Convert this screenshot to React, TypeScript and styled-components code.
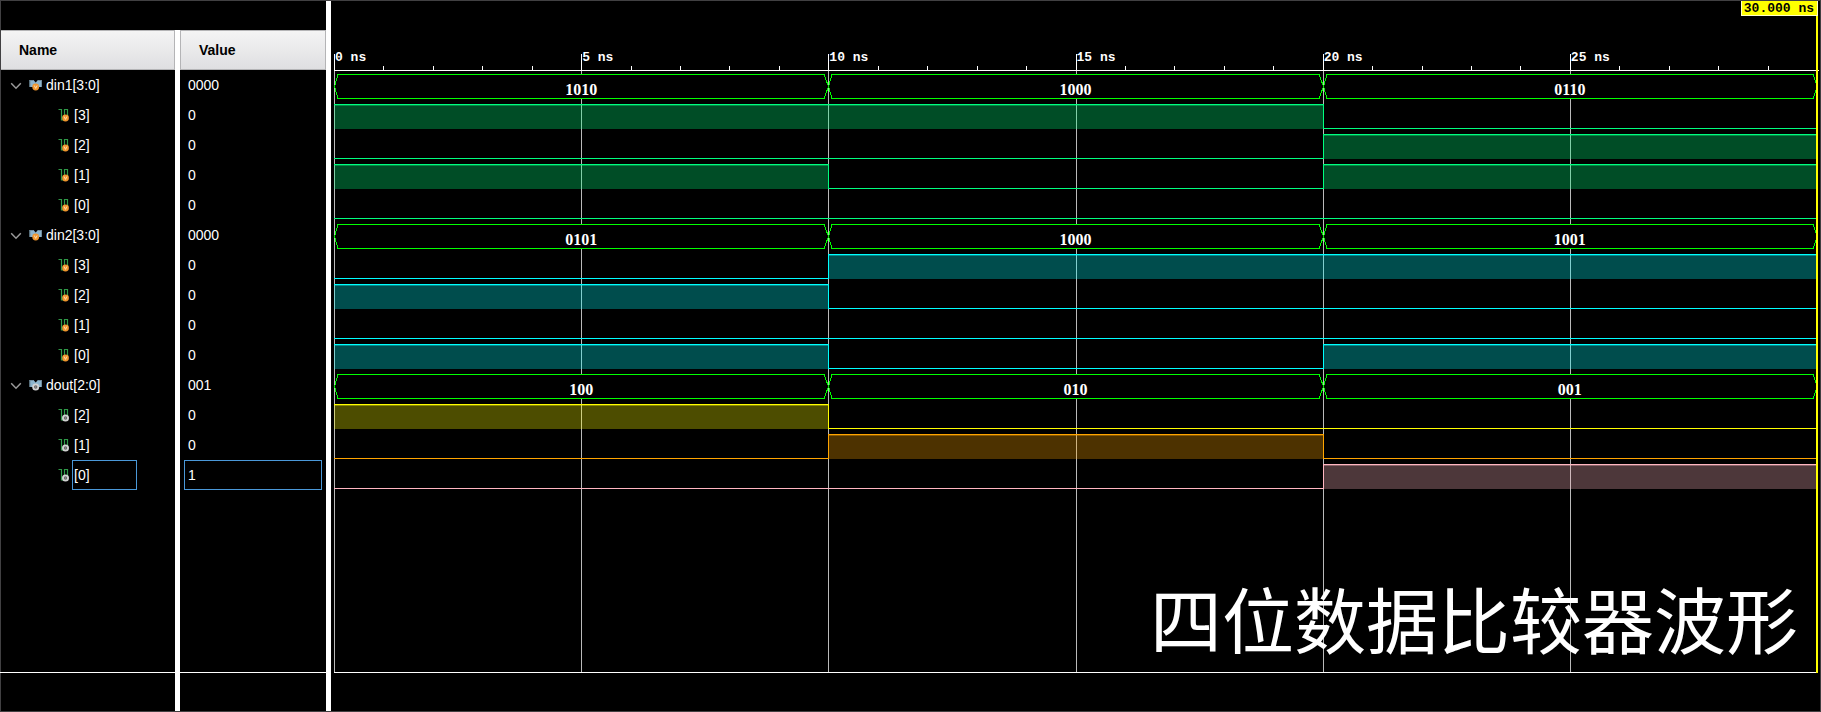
import React from "react";
import styled, { createGlobalStyle, css } from "styled-components";

const GlobalStyle = createGlobalStyle`
  *, *::before, *::after { box-sizing: border-box; }
  body {
    margin: 0;
    background: #000;
    color: #fff;
    font-family: "Liberation Sans", Arial, sans-serif;
    font-size: 14px;
  }
`;

const EDGE = "#414042";
const BUS = "#00ff00";
const SELECTION = "#4a98d8";
const DURATION = 30;

type Kind = "input" | "output";

interface Bit {
  label: string;
  value: string;
  color: string;
  levels: number[];
}

interface Bus {
  name: string;
  value: string;
  kind: Kind;
  segments: string[];
  bits: Bit[];
}

const GREEN = "0, 255, 127";
const CYAN = "0, 255, 255";
const YELLOW = "255, 255, 0";
const ORANGE = "255, 165, 0";
const PINK = "255, 182, 193";

const buses: Bus[] = [
  {
    name: "din1[3:0]",
    value: "0000",
    kind: "input",
    segments: ["1010", "1000", "0110"],
    bits: [
      { label: "[3]", value: "0", color: GREEN, levels: [1, 1, 0] },
      { label: "[2]", value: "0", color: GREEN, levels: [0, 0, 1] },
      { label: "[1]", value: "0", color: GREEN, levels: [1, 0, 1] },
      { label: "[0]", value: "0", color: GREEN, levels: [0, 0, 0] },
    ],
  },
  {
    name: "din2[3:0]",
    value: "0000",
    kind: "input",
    segments: ["0101", "1000", "1001"],
    bits: [
      { label: "[3]", value: "0", color: CYAN, levels: [0, 1, 1] },
      { label: "[2]", value: "0", color: CYAN, levels: [1, 0, 0] },
      { label: "[1]", value: "0", color: CYAN, levels: [0, 0, 0] },
      { label: "[0]", value: "0", color: CYAN, levels: [1, 0, 1] },
    ],
  },
  {
    name: "dout[2:0]",
    value: "001",
    kind: "output",
    segments: ["100", "010", "001"],
    bits: [
      { label: "[2]", value: "0", color: YELLOW, levels: [1, 0, 0] },
      { label: "[1]", value: "0", color: ORANGE, levels: [0, 1, 0] },
      { label: "[0]", value: "1", color: PINK, levels: [0, 0, 1] },
    ],
  },
];

const Page = styled.main`
  display: flex;
  min-height: 100vh;
  border: 1px solid ${EDGE};
  border-left: 0;
`;

const SignalPanel = styled.section`
  display: flex;
  flex-direction: column;
  flex: none;
  width: 331px;
  border-right: 5px solid #fff;
`;

const Toolbar = styled.div`
  height: 29px;
  border-left: 1px solid ${EDGE};
`;

const SignalTable = styled.table`
  width: 100%;
  table-layout: fixed;
  border-collapse: separate;
  border-spacing: 0;
  line-height: 30px;
`;

const nameColumn = css`
  width: 180px;
  border-left: 1px solid ${EDGE};
  border-right: 5px solid #fff;
`;

const HeadCell = styled.th<{ $first?: boolean }>`
  ${(p) => p.$first && nameColumn}
  height: 40px;
  padding: 0;
`;

const HeadLabel = styled.div`
  height: 40px;
  padding-left: 18px;
  border: 1px solid #b4b4b6;
  border-left-width: 0;
  background: linear-gradient(#f4f4f4, #dfdfe1);
  color: #000;
  line-height: 38px;
  text-align: left;

  ${HeadCell} + ${HeadCell} & {
    border-left-width: 1px;
  }
`;

const NameCell = styled.td`
  ${nameColumn}
  height: 30px;
  padding: 0;
`;

const NameContent = styled.div<{ $indent?: boolean }>`
  display: flex;
  align-items: center;
  height: 30px;
  padding-left: ${(p) => (p.$indent ? 57 : 9)}px;
`;

const Toggle = styled.button`
  display: flex;
  align-items: center;
  justify-content: center;
  width: 12px;
  height: 12px;
  margin: 2px 7px 0 0;
  padding: 0;
  border: 0;
  background: none;
`;

const NameText = styled.span<{ $selected?: boolean }>`
  height: 30px;
  line-height: ${(p) => (p.$selected ? 28 : 30)}px;
  border: ${(p) => (p.$selected ? `1px solid ${SELECTION}` : "0")};
  width: ${(p) => (p.$selected ? "65px" : "auto")};
  margin-left: ${(p) => (p.$selected ? 1 : 3)}px;
  padding-left: ${(p) => (p.$selected ? 1 : 0)}px;
`;

const ValueCell = styled.td`
  height: 30px;
  padding: 0 4px;
`;

const ValueText = styled.div<{ $selected?: boolean }>`
  height: 30px;
  padding-left: 3px;
  border: 1px solid ${(p) => (p.$selected ? SELECTION : "transparent")};
  line-height: 28px;
`;

const Rest = styled.div`
  display: flex;
  flex: 1;
  border-bottom: 1px solid #fff;
`;

const PanelFoot = styled.div`
  display: flex;
  height: 38px;
`;

const NameSpace = styled.div`
  ${nameColumn}
`;

const WavePanel = styled.section`
  position: relative;
  display: flex;
  flex: 1;
  flex-direction: column;
  min-width: 0;
  padding: 0 3px;
  font-family: "Liberation Mono", "Courier New", monospace;
  font-size: 13px;
  font-weight: bold;
`;

const timeColumns = css`
  display: grid;
  grid-auto-flow: column;
  grid-auto-columns: minmax(0, 1fr);
`;

const Ruler = styled.div`
  ${timeColumns}
  align-items: end;
  height: 69px;
`;

const Tick = styled.div<{ $major: boolean }>`
  height: ${(p) => (p.$major ? 16 : 4)}px;
  border-left: 1px solid #fff;
  line-height: 8px;
  white-space: nowrap;
`;

const Plot = styled.div`
  position: relative;
  flex: 1;
  border-bottom: 1px solid #fff;
`;

const AxisLine = styled.div`
  height: 1px;
  margin-right: -2px;
  background: #fff;
`;

const GridLines = styled.div`
  ${timeColumns}
  position: absolute;
  inset: 0;
`;

const GridCell = styled.div`
  border-left: 1px solid #bababa;
`;

const Lane = styled.div`
  ${timeColumns}
  grid-template-rows: 25px;
  position: relative;
  height: 30px;
  padding: 3px 0 2px;
`;

const BitSegment = styled.div<{ $rgb: string; $high: boolean; $edge: boolean }>`
  border-left: ${(p) => (p.$edge ? `1px solid rgb(${p.$rgb})` : "0")};
  ${(p) =>
    p.$high
      ? css`
          border-top: 1px solid rgb(${p.$rgb});
          background: rgba(${p.$rgb}, 0.3);
          background-clip: padding-box;
          box-shadow: inset 0 1px rgba(${p.$rgb}, 0.35);
        `
      : css`
          border-bottom: 1px solid rgb(${p.$rgb});
        `}
`;

const BusSegment = styled.div`
  display: flex;
  height: 25px;
`;

const BusBody = styled.div`
  flex: 1;
  height: 25px;
  border-top: 1px solid ${BUS};
  border-bottom: 1px solid ${BUS};
  background: #000;
  font-family: "Liberation Serif", "Times New Roman", serif;
  font-size: 16px;
  line-height: 29px;
  text-align: center;
`;

const Cursor = styled.div`
  position: absolute;
  top: 0;
  right: 2px;
  bottom: 38px;
  width: 2px;
  background: #ff0;
`;

const CursorTime = styled.div`
  position: absolute;
  top: 0;
  right: 2px;
  height: 15px;
  padding: 0 3px 0 2px;
  border: 1px solid #ffffc8;
  border-top: 0;
  background: #ff0;
  color: #000;
  line-height: 16px;
  white-space: nowrap;
`;

const Caption = styled.h1`
  position: absolute;
  right: 22px;
  bottom: 46px;
  margin: 0;
  font-family: "Noto Sans CJK SC", sans-serif;
  font-size: 72px;
  font-weight: 400;
  line-height: 96px;
  white-space: nowrap;
`;

const WaveFoot = styled.div`
  height: 38px;
`;

const Chevron = () => (
  <svg width="12" height="8" viewBox="0 0 12 8" fill="none" aria-hidden="true">
    <path d="M1.2 1.3 6 6.2l4.8-4.9" stroke="#9a9a9a" strokeWidth="1.5" />
  </svg>
);

const Marker = ({ kind, x, y }: { kind: Kind; x: number; y: number }) =>
  kind === "input" ? (
    <g>
      <circle cx={x} cy={y} r="3.4" fill="#f0962e" />
      <path d={`M${x - 1.4} ${y - 1.5}L${x} ${y + 1.4}L${x + 1.4} ${y - 1.5}`} stroke="#ffe2b8" strokeWidth="0.9" fill="none" />
    </g>
  ) : (
    <g>
      <circle cx={x} cy={y} r="2.6" fill="#666" stroke="#d2d2d2" strokeWidth="1.8" />
      <circle cx={x} cy={y} r="0.7" fill="#999" />
    </g>
  );

const BusIcon = ({ kind }: { kind: Kind }) => (
  <svg width="14" height="12" viewBox="0 0 14 12" aria-hidden="true">
    <path d="M.5 1h4l2.200 2.500 2.200-2.500h4v7H.5z" fill="#8db5cd" />
    <path d="M.5 1.500h3.800M9.200 1.500h3.800M1 1v7M12.500 1v7" stroke="#6c8595" strokeWidth="0.8" fill="none" />
    <Marker kind={kind} x={6.7} y={8} />
  </svg>
);

const BitIcon = ({ kind }: { kind: Kind }) => (
  <svg width="13" height="14" viewBox="0 0 13 14" aria-hidden="true">
    <path d="M.5 1.500h3V12h3V1.500h3V9" stroke="#2f9a48" strokeWidth="1.200" fill="none" />
    <Marker kind={kind} x={7.5} y={10} />
  </svg>
);

const LeftCap = () => (
  <svg width="4" height="25" viewBox="0 0 4 25" shapeRendering="crispEdges" aria-hidden="true">
    <path d="M4 .5 .5 12.500 4 24.500" stroke={BUS} fill="none" />
  </svg>
);

const RightCap = () => (
  <svg width="4" height="25" viewBox="0 0 4 25" overflow="visible" shapeRendering="crispEdges" aria-hidden="true">
    <path d="M0 .5 4.500 12.500 0 24.500" stroke={BUS} fill="none" />
  </svg>
);

const BusLane = ({ segments }: { segments: string[] }) => (
  <Lane>
    {segments.map((text, i) => (
      <BusSegment key={i}>
        <LeftCap />
        <BusBody>{text}</BusBody>
        <RightCap />
      </BusSegment>
    ))}
  </Lane>
);

const BitLane = ({ bit }: { bit: Bit }) => (
  <Lane>
    {bit.levels.map((level, i) => (
      <BitSegment key={i} $rgb={bit.color} $high={level === 1} $edge={i > 0 && bit.levels[i - 1] !== level} />
    ))}
  </Lane>
);

export default function App() {
  return (
    <>
      <GlobalStyle />
      <Page>
        <SignalPanel>
          <Toolbar />
          <SignalTable>
            <thead>
              <tr>
                <HeadCell $first scope="col">
                  <HeadLabel>Name</HeadLabel>
                </HeadCell>
                <HeadCell scope="col">
                  <HeadLabel>Value</HeadLabel>
                </HeadCell>
              </tr>
            </thead>
            <tbody>
              {buses.map((bus) => (
                <React.Fragment key={bus.name}>
                  <tr>
                    <NameCell>
                      <NameContent>
                        <Toggle type="button" aria-label={`Collapse ${bus.name}`} aria-expanded="true">
                          <Chevron />
                        </Toggle>
                        <BusIcon kind={bus.kind} />
                        <NameText>{bus.name}</NameText>
                      </NameContent>
                    </NameCell>
                    <ValueCell>
                      <ValueText>{bus.value}</ValueText>
                    </ValueCell>
                  </tr>
                  {bus.bits.map((bit) => (
                    <tr key={bit.label}>
                      <NameCell>
                        <NameContent $indent>
                          <BitIcon kind={bus.kind} />
                          <NameText $selected={bit.value === "1"}>{bit.label}</NameText>
                        </NameContent>
                      </NameCell>
                      <ValueCell>
                        <ValueText $selected={bit.value === "1"}>{bit.value}</ValueText>
                      </ValueCell>
                    </tr>
                  ))}
                </React.Fragment>
              ))}
            </tbody>
          </SignalTable>
          <Rest>
            <NameSpace />
          </Rest>
          <PanelFoot>
            <NameSpace />
          </PanelFoot>
        </SignalPanel>
        <WavePanel>
          <Ruler>
            {Array.from({ length: DURATION }, (_, t) => (
              <Tick key={t} $major={t % 5 === 0}>
                {t % 5 === 0 ? `${t} ns` : null}
              </Tick>
            ))}
          </Ruler>
          <AxisLine />
          <Plot>
            <GridLines>
              {Array.from({ length: DURATION / 5 }, (_, i) => (
                <GridCell key={i} />
              ))}
            </GridLines>
            {buses.map((bus) => (
              <React.Fragment key={bus.name}>
                <BusLane segments={bus.segments} />
                {bus.bits.map((bit) => (
                  <BitLane key={bit.label} bit={bit} />
                ))}
              </React.Fragment>
            ))}
          </Plot>
          <WaveFoot />
          <Cursor />
          <CursorTime>30.000 ns</CursorTime>
          <Caption>四位数据比较器波形</Caption>
        </WavePanel>
      </Page>
    </>
  );
}
